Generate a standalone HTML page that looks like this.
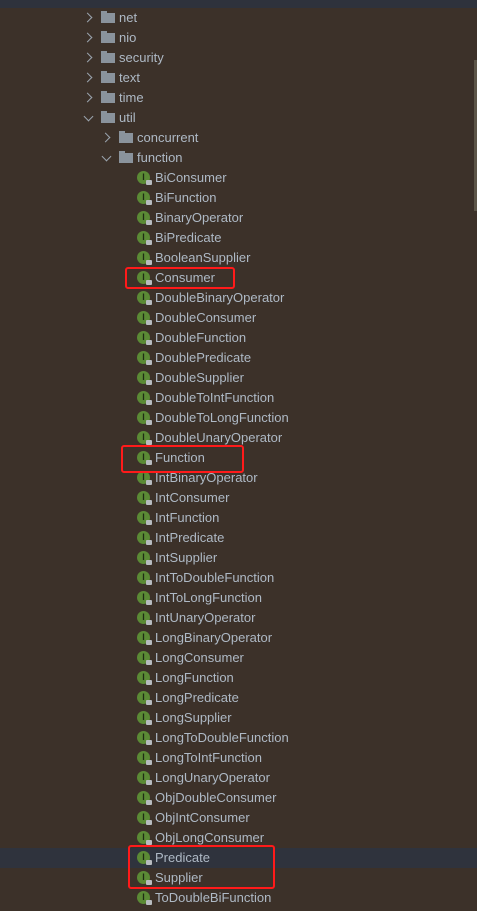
<!DOCTYPE html>
<html><head><style>
body{margin:0;width:477px;height:911px;background:#3c3129;position:relative;overflow:hidden;font-family:"Liberation Sans","DejaVu Sans",sans-serif;font-size:13px;color:#aeb9c5}
.top{position:absolute;left:0;top:0;width:477px;height:8px;background:#2e323c}
.row{position:absolute;height:20px;line-height:20px;white-space:nowrap}
.sel{position:absolute;left:0;width:477px;top:848px;height:20px;background:#2f333d}
.chev{position:absolute;width:6px;height:6px;border-right:1.2px solid #9aa3ad;border-bottom:1.2px solid #9aa3ad}
.fold{position:absolute;width:14px;height:10px;background:#8a939c;top:5px}
.fold:before{content:"";position:absolute;left:0;top:-2px;width:6px;height:2px;background:#8a939c}
.ic{position:absolute;left:137px;top:3px;width:13px;height:13px;border-radius:50%;background:#5b8a35;color:#1e2a12;font-size:9px;line-height:13px;text-align:center;font-weight:bold}
.ic:after{content:"";position:absolute;right:-2px;bottom:-1px;width:6px;height:5px;background:#b8bcc0;border-radius:1px}
.red{position:absolute;border:2px solid #ff1a1a;border-radius:3px}
.sb{position:absolute;left:474px;top:60px;width:3px;height:151px;background:#5c5548}
</style></head><body>
<div class="top"></div>
<div class="sel"></div>
<div class="sb"></div>
<div class="row" style="top:8px;left:0"><div class="chev" style="left:84px;top:6px;transform:rotate(-45deg)"></div><div class="fold" style="left:101px"></div><span style="position:absolute;left:119px">net</span></div>
<div class="row" style="top:28px;left:0"><div class="chev" style="left:84px;top:6px;transform:rotate(-45deg)"></div><div class="fold" style="left:101px"></div><span style="position:absolute;left:119px">nio</span></div>
<div class="row" style="top:48px;left:0"><div class="chev" style="left:84px;top:6px;transform:rotate(-45deg)"></div><div class="fold" style="left:101px"></div><span style="position:absolute;left:119px">security</span></div>
<div class="row" style="top:68px;left:0"><div class="chev" style="left:84px;top:6px;transform:rotate(-45deg)"></div><div class="fold" style="left:101px"></div><span style="position:absolute;left:119px">text</span></div>
<div class="row" style="top:88px;left:0"><div class="chev" style="left:84px;top:6px;transform:rotate(-45deg)"></div><div class="fold" style="left:101px"></div><span style="position:absolute;left:119px">time</span></div>
<div class="row" style="top:108px;left:0"><div class="chev" style="left:85px;top:5px;transform:rotate(45deg)"></div><div class="fold" style="left:101px"></div><span style="position:absolute;left:119px">util</span></div>
<div class="row" style="top:128px;left:0"><div class="chev" style="left:102px;top:6px;transform:rotate(-45deg)"></div><div class="fold" style="left:119px"></div><span style="position:absolute;left:137px">concurrent</span></div>
<div class="row" style="top:148px;left:0"><div class="chev" style="left:103px;top:5px;transform:rotate(45deg)"></div><div class="fold" style="left:119px"></div><span style="position:absolute;left:137px">function</span></div>
<div id="list"></div>
<div class="red" style="left:125px;top:267px;width:106px;height:18px"></div>
<div class="red" style="left:121px;top:445px;width:119px;height:24px"></div>
<div class="red" style="left:128px;top:845px;width:143px;height:40px"></div>
<script>
var n=["BiConsumer","BiFunction","BinaryOperator","BiPredicate","BooleanSupplier","Consumer","DoubleBinaryOperator","DoubleConsumer","DoubleFunction","DoublePredicate","DoubleSupplier","DoubleToIntFunction","DoubleToLongFunction","DoubleUnaryOperator","Function","IntBinaryOperator","IntConsumer","IntFunction","IntPredicate","IntSupplier","IntToDoubleFunction","IntToLongFunction","IntUnaryOperator","LongBinaryOperator","LongConsumer","LongFunction","LongPredicate","LongSupplier","LongToDoubleFunction","LongToIntFunction","LongUnaryOperator","ObjDoubleConsumer","ObjIntConsumer","ObjLongConsumer","Predicate","Supplier","ToDoubleBiFunction"];
var h="";for(var i=0;i<n.length;i++){h+='<div class="row" style="top:'+(168+i*20)+'px;left:0"><div class="ic">I</div><span style="position:absolute;left:155px">'+n[i]+'</span></div>';}
document.getElementById("list").innerHTML=h;
</script>
</body></html>
